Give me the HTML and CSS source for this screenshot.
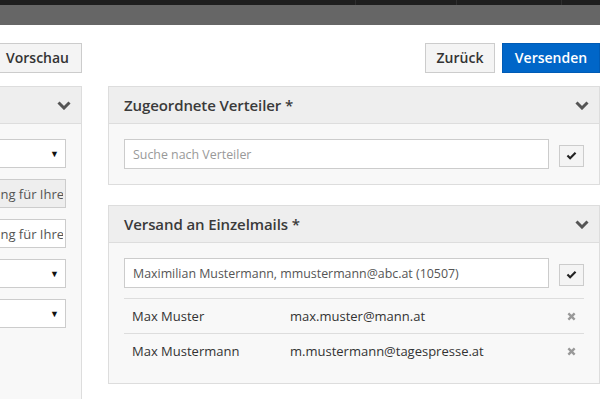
FILE: index.html
```html
<!DOCTYPE html>
<html lang="de">
<head>
<meta charset="utf-8">
<title>Versand</title>
<link rel="stylesheet" href="styles.css">
</head>
<body>
<div class="topbar">
  <div class="topbar-dark">
    <span class="tab"></span><span class="tab"></span><span class="tab"></span>
  </div>
  <div class="topbar-gray"></div>
</div>

<div class="page">
  <div class="toolbar">
    <div class="toolbar-left">
      <button class="btn">Vorschau</button>
    </div>
    <div class="toolbar-right">
      <button class="btn btn-back">Zurück</button>
      <button class="btn btn-primary">Versenden</button>
    </div>
  </div>

  <div class="columns">
    <div class="col-left">
      <div class="panel panel-tall">
        <div class="panel-head">
          <span class="panel-title">Allgemein</span>
          <svg class="chevron" viewBox="0 0 14 9" width="14" height="9"><polyline points="1.5,1.5 7,7 12.5,1.5" fill="none" stroke="#555" stroke-width="3"/></svg>
        </div>
        <div class="panel-body form-stack">
          <div class="select"><span class="select-text">Bitte wählen</span><span class="caret">▼</span></div>
          <div class="field field-readonly"><div class="clip"><span class="field-text">Bitte geben Sie eine Bezeichnung für Ihre Aussendung ein</span></div></div>
          <div class="field"><div class="clip"><span class="field-text">Bitte geben Sie eine Bezeichnung für Ihre Aussendung ein</span></div></div>
          <div class="select"><span class="select-text">Bitte wählen</span><span class="caret">▼</span></div>
          <div class="select"><span class="select-text">Bitte wählen</span><span class="caret">▼</span></div>
        </div>
      </div>
    </div>

    <div class="col-right">
      <div class="panel">
        <div class="panel-head">
          <span class="panel-title">Zugeordnete Verteiler *</span>
          <svg class="chevron" viewBox="0 0 14 9" width="14" height="9"><polyline points="1.5,1.5 7,7 12.5,1.5" fill="none" stroke="#555" stroke-width="3"/></svg>
        </div>
        <div class="panel-body">
          <div class="search-row">
            <div class="field"><span class="placeholder">Suche nach Verteiler</span></div>
            <button class="btn-check"><svg viewBox="0 0 12 10" width="11" height="9"><polyline points="1.5,5 4.5,8 10.5,2" fill="none" stroke="#222" stroke-width="2.4"/></svg></button>
          </div>
        </div>
      </div>

      <div class="panel">
        <div class="panel-head">
          <span class="panel-title">Versand an Einzelmails *</span>
          <svg class="chevron" viewBox="0 0 14 9" width="14" height="9"><polyline points="1.5,1.5 7,7 12.5,1.5" fill="none" stroke="#555" stroke-width="3"/></svg>
        </div>
        <div class="panel-body">
          <div class="search-row">
            <div class="field"><span class="value">Maximilian Mustermann, mmustermann@abc.at (10507)</span></div>
            <button class="btn-check"><svg viewBox="0 0 12 10" width="11" height="9"><polyline points="1.5,5 4.5,8 10.5,2" fill="none" stroke="#222" stroke-width="2.4"/></svg></button>
          </div>
          <ul class="recipients">
            <li class="recipient">
              <span class="r-name">Max Muster</span>
              <span class="r-mail">max.muster@mann.at</span>
              <svg class="r-remove" viewBox="0 0 10 10" width="9" height="9"><path d="M1.5 1.5 L8.5 8.5 M8.5 1.5 L1.5 8.5" stroke="#999" stroke-width="2.6" fill="none"/></svg>
            </li>
            <li class="recipient">
              <span class="r-name">Max Mustermann</span>
              <span class="r-mail">m.mustermann@tagespresse.at</span>
              <svg class="r-remove" viewBox="0 0 10 10" width="9" height="9"><path d="M1.5 1.5 L8.5 8.5 M8.5 1.5 L1.5 8.5" stroke="#999" stroke-width="2.6" fill="none"/></svg>
            </li>
          </ul>
        </div>
      </div>
    </div>
  </div>
</div>
</body>
</html>
```

FILE: styles.css
```css
* { box-sizing: border-box; }

html, body {
  margin: 0;
  padding: 0;
  background: #fff;
  overflow: hidden;
}

body {
  font-family: "Open Sans", "Noto Sans", sans-serif;
  color: #333;
  font-size: 13px;
  width: 600px;
  height: 399px;
}

.topbar-dark {
  height: 5px;
  background: #1e1e1e;
  display: flex;
}
.topbar-dark .tab {
  width: 1px;
  background: #2e2e2e;
}
.topbar-dark .tab:nth-child(1) { margin-left: 355px; }
.topbar-dark .tab:nth-child(2) { margin-left: 100px; }
.topbar-dark .tab:nth-child(3) { margin-left: 104px; }

.topbar-gray {
  height: 20px;
  background: #666;
}

.page {
  padding-top: 18px;
}

.toolbar {
  display: flex;
  justify-content: space-between;
  margin-left: -218px;
  height: 30px;
}
.toolbar-left {
  width: 300px;
  display: flex;
  justify-content: flex-end;
}
.toolbar-right {
  display: flex;
  gap: 7px;
}

.btn {
  font-family: inherit;
  font-size: 14px;
  height: 30px;
  padding: 0 12px;
  border: 1px solid #ccc;
  background: #f4f4f4;
  color: #333;
  font-weight: 600;
  line-height: 28px;
  margin: 0;
}
.btn-back {
  width: 70px;
  padding: 0;
}
.btn-primary {
  background: #0066c8;
  border-color: #005bb5;
  color: #fff;
  width: 98px;
  padding: 0;
}

.columns {
  display: flex;
  gap: 26px;
  margin-left: -218px;
  margin-top: 13px;
}
.col-left {
  width: 300px;
  flex: none;
}
.col-right {
  flex: 1;
  display: flex;
  flex-direction: column;
  gap: 20px;
}

.panel {
  border: 1px solid #ddd;
  background: #f8f8f8;
}
.panel-tall {
  height: 330px;
}
.panel-head {
  height: 37px;
  background: #eee;
  border-bottom: 1px solid #ddd;
  display: flex;
  align-items: center;
  justify-content: space-between;
  padding: 0 10px 0 15px;
}
.panel-title {
  font-size: 15px;
  font-weight: 600;
  color: #3a3a3a;
  letter-spacing: -0.1px;
}
.chevron { display: block; }

.panel-body {
  padding: 15px;
}

.form-stack {
  display: flex;
  flex-direction: column;
  gap: 11px;
}
.form-stack .select,
.form-stack .field {
  height: 29px;
}

.select, .field {
  height: 30px;
  border: 1px solid #ccc;
  background: #fff;
  display: flex;
  align-items: center;
  padding: 0 8px;
  overflow: hidden;
  white-space: nowrap;
  font-size: 12.4px;
  color: #555;
}
.select { justify-content: space-between; padding-right: 6px; }
.caret { font-size: 9px; color: #111; }
.field-readonly { background: #eee; }
.form-stack .field { padding-right: 2px; }
.clip {
  flex: 1;
  overflow: hidden;
  white-space: nowrap;
}
.field-text {
  color: #555;
  font-size: 13px;
  margin-left: 8px;
}

.search-row {
  display: flex;
  align-items: center;
  gap: 10px;
}
.search-row .field { flex: 1; }
.placeholder { color: #999; }
.value { color: #555; }

.btn-check {
  width: 25px;
  height: 22px;
  margin-top: 3px;
  border: 1px solid #ccc;
  background: #f4f4f4;
  display: flex;
  align-items: center;
  justify-content: center;
  padding: 0;
  flex: none;
}
.btn-check svg { display: block; }

.recipients {
  list-style: none;
  margin: 10px 0 0 0;
  padding: 0;
}
.recipient {
  height: 35px;
  border-top: 1px solid #ddd;
  display: flex;
  align-items: center;
  padding: 0 8px;
  font-size: 13px;
  color: #333;
}
.r-name { width: 158px; }
.r-mail { flex: 1; }
.r-remove { display: block; }
```
